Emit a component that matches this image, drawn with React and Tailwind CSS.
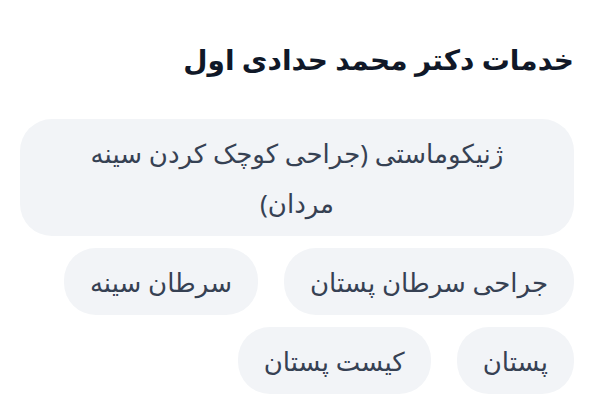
const services = [
  { lines: ['ژنیکوماستی (جراحی کوچک کردن سینه', 'مردان)'], wide: true },
  { lines: ['جراحی سرطان پستان'] },
  { lines: ['سرطان سینه'] },
  { lines: ['پستان'] },
  { lines: ['کیست پستان'] },
];

export default function App() {
  return (
    <div
      dir="rtl"
      className="min-h-screen bg-white pl-5 pr-8 pt-[37px]"
      style={{ fontFamily: "'Noto Sans', 'DejaVu Sans', sans-serif" }}
    >
      <h2 className="text-[28px] font-bold leading-[44px] text-gray-900">خدمات دکتر محمد حدادی اول</h2>

      <div className="mt-[38px] flex flex-wrap gap-x-[26px] gap-y-3">
        {services.map((s) => (
          <span
            key={s.lines[0]}
            className={`rounded-[32px] bg-[#f2f4f7] px-[26px] py-[8.5px] text-center text-[26px] leading-[50px] text-gray-700 ${s.wide ? 'w-full' : ''}`}
          >
            {s.lines.map((l, i) => (
              <span key={i} className="block">{l}</span>
            ))}
          </span>
        ))}
      </div>
    </div>
  );
}
